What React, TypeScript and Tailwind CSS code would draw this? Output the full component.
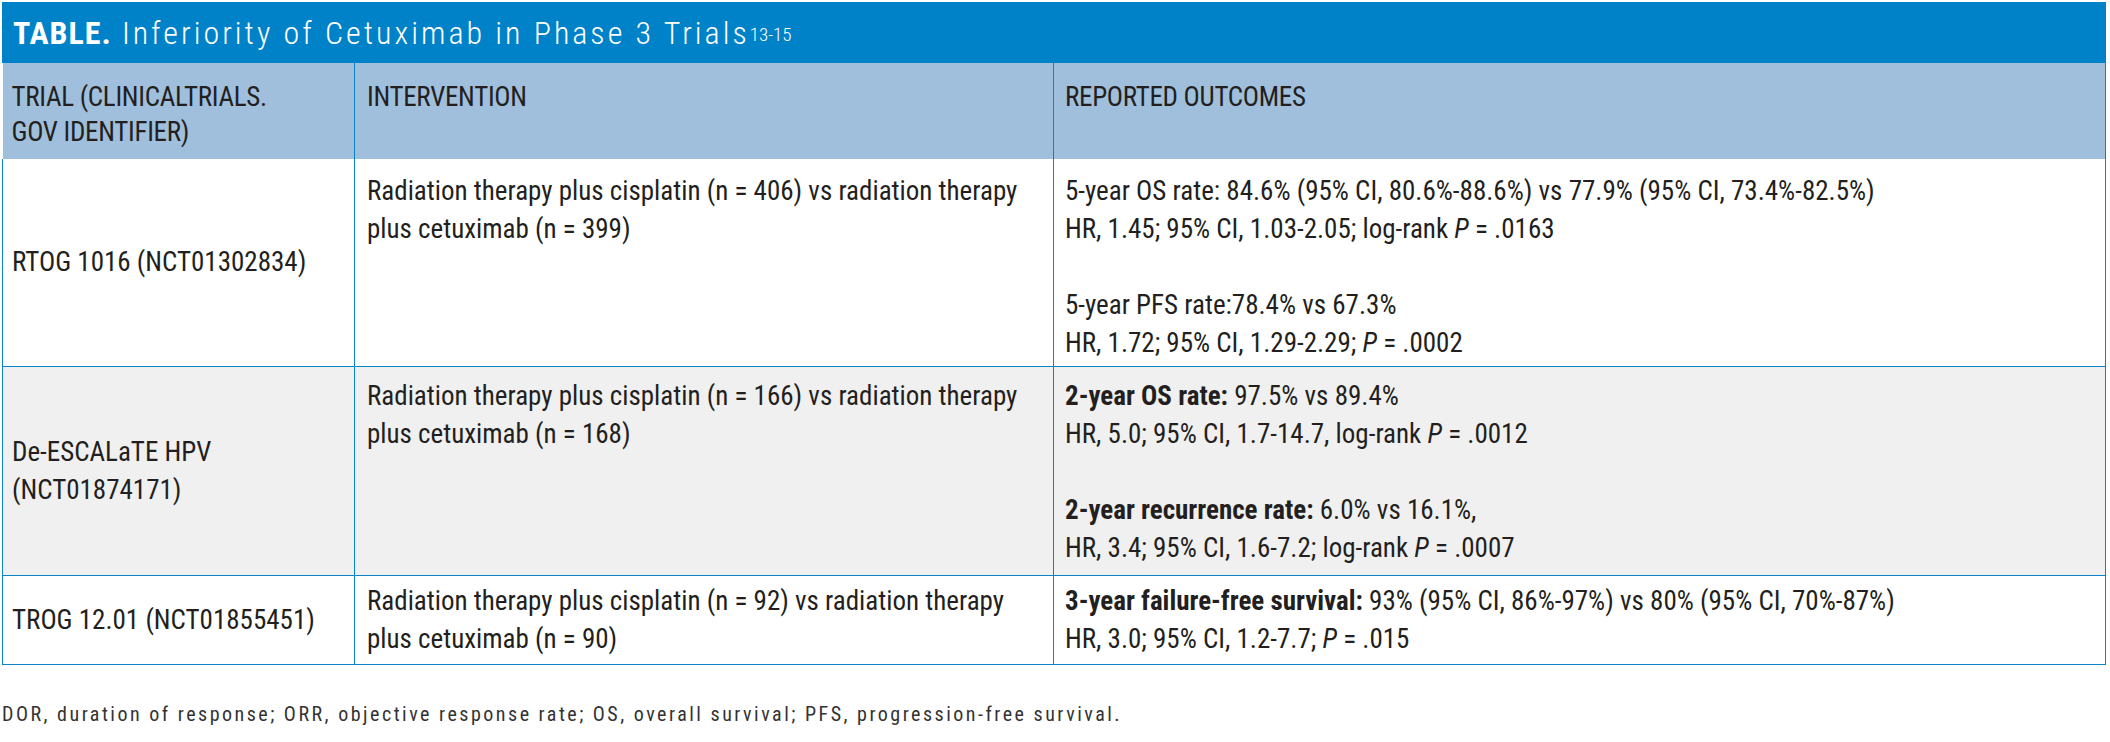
const font = { fontFamily: '"Roboto Condensed", "Liberation Sans", Arial, sans-serif' }

function Bold({ children }: { children: React.ReactNode }) {
    return <span className="font-bold">{children}</span>
}

function P() {
    return <span className="italic">P</span>
}

const rows = [
    {
        trial: <>RTOG 1016 (NCT01302834)</>,
        intervention: <>Radiation therapy plus cisplatin (n = 406) vs radiation therapy<br />plus cetuximab (n = 399)</>,
        outcomes: [
            <>5-year OS rate: 84.6% (95% CI, 80.6%-88.6%) vs 77.9% (95% CI, 73.4%-82.5%)</>,
            <>HR, 1.45; 95% CI, 1.03-2.05; log-rank <P /> = .0163</>,
            null,
            <>5-year PFS rate:78.4% vs 67.3%</>,
            <>HR, 1.72; 95% CI, 1.29-2.29; <P /> = .0002</>,
        ],
        bg: "bg-white",
        h: "h-[207px]",
        pt: "pt-[13px]",
    },
    {
        trial: <>De-ESCALaTE HPV<br />(NCT01874171)</>,
        intervention: <>Radiation therapy plus cisplatin (n = 166) vs radiation therapy<br />plus cetuximab (n = 168)</>,
        outcomes: [
            <><Bold>2-year OS rate:</Bold> 97.5% vs 89.4%</>,
            <>HR, 5.0; 95% CI, 1.7-14.7, log-rank <P /> = .0012</>,
            null,
            <><Bold>2-year recurrence rate:</Bold> 6.0% vs 16.1%,</>,
            <>HR, 3.4; 95% CI, 1.6-7.2; log-rank <P /> = .0007</>,
        ],
        bg: "bg-[#f0f0f0]",
        h: "h-[209px]",
        pt: "pt-[10px]",
    },
    {
        trial: <>TROG 12.01 (NCT01855451)</>,
        intervention: <>Radiation therapy plus cisplatin (n = 92) vs radiation therapy<br />plus cetuximab (n = 90)</>,
        outcomes: [
            <><Bold>3-year failure-free survival:</Bold> 93% (95% CI, 86%-97%) vs 80% (95% CI, 70%-87%)</>,
            <>HR, 3.0; 95% CI, 1.2-7.7; <P /> = .015</>,
        ],
        bg: "bg-white",
        h: "h-[89px]",
        pt: "pt-[6px]",
    },
]

export default function App() {
    return (
        <div className="w-[2110px] h-[742px] bg-white pt-[2px] pl-[2px] text-[#231f20]" style={font}>
            <div className="w-[2104px]">
                {/* title bar */}
                <div className="h-[61px] bg-[#0082c8] flex items-center pl-[11px] text-white text-[32px]">
                    <span className="font-bold tracking-[1px]">TABLE.</span>
                    <span className="ml-[10px] font-light tracking-[3px] whitespace-nowrap">
                        Inferiority of Cetuximab in Phase 3 Trials
                        <sup className="text-[19px] tracking-[0px] relative -top-[3px]">13-15</sup>
                    </span>
                </div>

                <table className="w-full table-fixed border-collapse text-[27px] leading-[38px]">
                    <colgroup>
                        <col className="w-[352px]" />
                        <col className="w-[699px]" />
                        <col />
                    </colgroup>
                    <thead>
                        <tr className="h-[96px] bg-[#a0bfdc] text-[27px] leading-[35px] tracking-[-0.3px]">
                            <th className="align-top text-left font-normal pt-[17px] pl-[9px] border-r border-[#0a84c8] whitespace-nowrap">
                                TRIAL (CLINICALTRIALS.<br />GOV IDENTIFIER)
                            </th>
                            <th className="align-top text-left font-normal pt-[17px] pl-[12px] border-r border-[#0a84c8]">
                                INTERVENTION
                            </th>
                            <th className="align-top text-left font-normal pt-[17px] pl-[11px] border-r border-[#0a84c8]">
                                REPORTED OUTCOMES
                            </th>
                        </tr>
                    </thead>
                    <tbody>
                        {rows.map((r, i) => (
                            <tr key={i} className={`${r.bg} ${r.h} border-b border-[#0a84c8]`}>
                                <td className="align-middle pl-[9px] pr-2 border-l border-r border-[#0a84c8]">
                                    {r.trial}
                                </td>
                                <td className={`align-top ${r.pt} pl-[12px] pr-2 border-r border-[#0a84c8] whitespace-nowrap`}>
                                    {r.intervention}
                                </td>
                                <td className={`align-top ${r.pt} pl-[11px] pr-4 border-r border-[#0a84c8]`}>
                                    {r.outcomes.map((o, j) => (
                                        <div key={j} className="h-[38px] whitespace-nowrap">{o}</div>
                                    ))}
                                </td>
                            </tr>
                        ))}
                    </tbody>
                </table>

                <p className="mt-[34px] text-[20px] leading-[30px] tracking-[2.5px] text-[#333333]">
                    DOR, duration of response; ORR, objective response rate; OS, overall survival; PFS, progression-free survival.
                </p>
            </div>
        </div>
    )
}
